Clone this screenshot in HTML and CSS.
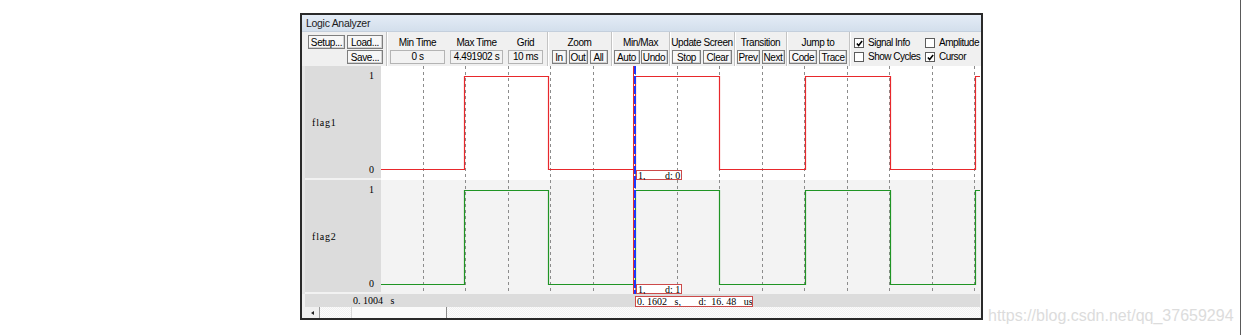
FILE: index.html
```html
<!DOCTYPE html>
<html lang="en">
<head>
    <meta charset="UTF-8">
    <title>Logic Analyzer</title>
    <link rel="stylesheet" href="styles.css">
</head>
<body>
<div class="page">
    <div class="screen">
        <div class="window">
            <div class="titlebar">Logic Analyzer</div>

            <div class="toolbar">
                <div class="group g-file">
                    <button class="btn b-setup">Setup...</button>
                    <button class="btn">Load...</button>
                    <button class="btn b-save">Save...</button>
                </div>

                <div class="group g-time">
                    <div class="field">
                        <span class="label">Min Time</span>
                        <span class="value v-min">0 s</span>
                    </div>
                    <div class="field">
                        <span class="label">Max Time</span>
                        <span class="value v-max">4.491902 s</span>
                    </div>
                    <div class="field">
                        <span class="label">Grid</span>
                        <span class="value v-grid">10 ms</span>
                    </div>
                </div>

                <div class="group g-zoom">
                    <span class="label">Zoom</span>
                    <div class="buttons">
                        <button class="btn b-in">In</button>
                        <button class="btn b-out">Out</button>
                        <button class="btn b-all">All</button>
                    </div>
                </div>

                <div class="group g-minmax">
                    <span class="label">Min/Max</span>
                    <div class="buttons tight">
                        <button class="btn b-auto">Auto</button>
                        <button class="btn b-undo">Undo</button>
                    </div>
                </div>

                <div class="group g-update">
                    <span class="label">Update Screen</span>
                    <div class="buttons">
                        <button class="btn b-stop">Stop</button>
                        <button class="btn b-stop">Clear</button>
                    </div>
                </div>

                <div class="group g-trans">
                    <span class="label">Transition</span>
                    <div class="buttons">
                        <button class="btn b-prev">Prev</button>
                        <button class="btn b-prev">Next</button>
                    </div>
                </div>

                <div class="group g-jump">
                    <span class="label">Jump to</span>
                    <div class="buttons">
                        <button class="btn b-code">Code</button>
                        <button class="btn b-code">Trace</button>
                    </div>
                </div>

                <div class="g-check">
                    <label class="check"><span class="box on"><svg viewBox="0 0 8 8"><path d="M1 4 L3 6.2 L7 1.2"/></svg></span>Signal Info</label>
                    <label class="check"><span class="box"></span>Amplitude</label>
                    <label class="check"><span class="box"></span>Show Cycles</label>
                    <label class="check"><span class="box on"><svg viewBox="0 0 8 8"><path d="M1 4 L3 6.2 L7 1.2"/></svg></span>Cursor</label>
                </div>
            </div>

            <div class="plot">
                <div class="row">
                    <div class="side"></div>
                    <div class="pane">
                        <span class="tick">1</span>
                        <span class="name">flag1</span>
                        <span class="tick">0</span>
                    </div>
                    <svg class="wave" width="599" height="114" viewBox="0 0 599 114">
                        <g class="grid">
                            <line x1="42.5" y1="0" x2="42.5" y2="114"/>
                            <line x1="84.5" y1="0" x2="84.5" y2="114"/>
                            <line x1="127.5" y1="0" x2="127.5" y2="114"/>
                            <line x1="169.5" y1="0" x2="169.5" y2="114"/>
                            <line x1="212.5" y1="0" x2="212.5" y2="114"/>
                            <line x1="254.5" y1="0" x2="254.5" y2="114"/>
                            <line x1="296.5" y1="0" x2="296.5" y2="114"/>
                            <line x1="338.5" y1="0" x2="338.5" y2="114"/>
                            <line x1="381.5" y1="0" x2="381.5" y2="114"/>
                            <line x1="423.5" y1="0" x2="423.5" y2="114"/>
                            <line x1="466.5" y1="0" x2="466.5" y2="114"/>
                            <line x1="508.5" y1="0" x2="508.5" y2="114"/>
                            <line x1="551.5" y1="0" x2="551.5" y2="114"/>
                            <line x1="593.5" y1="0" x2="593.5" y2="114"/>
                        </g>
                        <path class="trace red" d="M0 103.5 H83.5 V10.5 H167.5 V103.5 H254.5 V10.5 H338.5 V103.5 H424.5 V10.5 H509.5 V103.5 H594.5 V10.5 H599"/>
                        <line class="cursor-under" x1="252.5" y1="0" x2="252.5" y2="114"/>
                        <line class="cursor" x1="254" y1="0" x2="254" y2="114"/>
                        <rect class="tag-box" x="255.5" y="104.5" width="45" height="9"/>
                        <text class="tag" x="257" y="112.5">1,</text>
                        <text class="tag" x="284" y="112.5">d: 0</text>
                    </svg>
                </div>

                <div class="row alt">
                    <div class="side"></div>
                    <div class="pane">
                        <span class="tick">1</span>
                        <span class="name">flag2</span>
                        <span class="tick">0</span>
                    </div>
                    <svg class="wave" width="599" height="114" viewBox="0 0 599 114">
                        <g class="grid">
                            <line x1="42.5" y1="0" x2="42.5" y2="114"/>
                            <line x1="84.5" y1="0" x2="84.5" y2="114"/>
                            <line x1="127.5" y1="0" x2="127.5" y2="114"/>
                            <line x1="169.5" y1="0" x2="169.5" y2="114"/>
                            <line x1="212.5" y1="0" x2="212.5" y2="114"/>
                            <line x1="254.5" y1="0" x2="254.5" y2="114"/>
                            <line x1="296.5" y1="0" x2="296.5" y2="114"/>
                            <line x1="338.5" y1="0" x2="338.5" y2="114"/>
                            <line x1="381.5" y1="0" x2="381.5" y2="114"/>
                            <line x1="423.5" y1="0" x2="423.5" y2="114"/>
                            <line x1="466.5" y1="0" x2="466.5" y2="114"/>
                            <line x1="508.5" y1="0" x2="508.5" y2="114"/>
                            <line x1="551.5" y1="0" x2="551.5" y2="114"/>
                            <line x1="593.5" y1="0" x2="593.5" y2="114"/>
                        </g>
                        <path class="trace green" d="M0 104.5 H83.5 V10.5 H167.5 V104.5 H254.5 V10.5 H338.5 V104.5 H424.5 V10.5 H509.5 V104.5 H594.5 V10.5 H599"/>
                        <line class="cursor-under" x1="252.5" y1="0" x2="252.5" y2="114"/>
                        <line class="cursor" x1="254" y1="0" x2="254" y2="114"/>
                        <rect class="tag-box" x="255.5" y="104.5" width="45" height="9"/>
                        <text class="tag" x="257" y="112.5">1,</text>
                        <text class="tag" x="284" y="112.5">d: 1</text>
                    </svg>
                </div>

                <div class="timebar">
                    <span class="time-now">0. 1004   s</span>
                    <span class="time-cursor">0. 1602   s,       d:  16. 48   us</span>
                </div>

                <div class="scrollbar">
                    <span class="arrow"></span>
                    <div class="track"><span class="thumb"></span></div>
                </div>
            </div>
        </div>

        <div class="watermark">https://blog.csdn.net/qq_37659294</div>
    </div>
</div>
</body>
</html>
```

FILE: styles.css
```css
body{
    margin: 0;
    background: #fff;
    font-family: "Liberation Sans", Arial, sans-serif;
}

.page{
    width: 1241px;
    height: 335px;
    box-sizing: border-box;
    padding: 13px 0 0 300px;
    border-right: 1px solid #5a5a5a;
    overflow: hidden;
}

.screen{
    display: flex;
}

.window{
    width: 683px;
    height: 307px;
    box-sizing: border-box;
    border: 2px solid #2a2a2a;
    background: #f0f0f0;
    display: flex;
    flex-direction: column;
    flex: none;
}

.titlebar{
    height: 17px;
    box-sizing: border-box;
    padding-left: 4px;
    font-size: 10.5px;
    letter-spacing: -0.3px;
    line-height: 16px;
    color: #1c1c1c;
    background: linear-gradient(#e4ecf6, #d3dfec);
    border-bottom: 1px solid #c4cfdc;
}

/* toolbar */
.toolbar{
    display: flex;
    height: 34px;
    flex: none;
    font-size: 10px;
    letter-spacing: -0.4px;
    color: #000;
}

.group{
    box-sizing: border-box;
    height: 100%;
    padding-top: 3px;
    border-right: 1px solid #c4c4c4;
    box-shadow: 1px 0 0 #fff;
    display: flex;
    flex-direction: column;
    align-items: center;
}

.label{
    height: 15px;
    line-height: 15px;
    white-space: nowrap;
}

.buttons{
    display: flex;
    gap: 2px;
}

.buttons.tight{
    gap: 1px;
}

.btn{
    height: 14px;
    box-sizing: border-box;
    padding: 0;
    border: 1px solid #7e7e7e;
    background: #f7f7f7;
    box-shadow: inset -1px -1px #d2d2d2;
    font-family: inherit;
    font-size: inherit;
    letter-spacing: inherit;
    line-height: 11px;
    color: #000;
    text-align: center;
    white-space: nowrap;
}

.g-file{
    width: 85px;
    padding: 3px 0 0 6px;
    display: grid;
    grid-template-columns: 37px 36px;
    grid-template-rows: 14px 14px;
    gap: 1px 2px;
    align-content: start;
}

.g-file .b-save{
    grid-column: 2;
}

.g-time{
    width: 161px;
    padding-left: 3px;
    flex-direction: row;
    align-items: flex-start;
    gap: 5px;
}

.field{
    display: flex;
    flex-direction: column;
    align-items: center;
}

.value{
    height: 14px;
    box-sizing: border-box;
    border: 1px solid #b4b4b4;
    background: #f2f2f2;
    line-height: 12px;
    text-align: center;
    white-space: nowrap;
}

.v-min{ width: 55px; }
.v-max{ width: 53px; }
.v-grid{ width: 35px; }

.g-zoom{ width: 64px; }
.g-minmax{ width: 58px; }
.g-update{ width: 65px; }
.g-trans{ width: 52px; }
.g-jump{ width: 63px; }

.b-in{ width: 15px; }
.b-out{ width: 19px; }
.b-all{ width: 18px; }
.b-auto{ width: 26px; }
.b-undo{ width: 27px; }
.b-stop{ width: 29px; }
.b-prev{ width: 23px; }
.b-code{ width: 28px; }

.g-check{
    flex: 1;
    padding: 6px 0 0 4px;
    display: grid;
    grid-template-columns: 71px auto;
    grid-auto-rows: 10px;
    row-gap: 4px;
    white-space: nowrap;
    letter-spacing: -0.5px;
}

.check{
    display: flex;
    align-items: center;
    gap: 4px;
    line-height: 10px;
}

.box{
    width: 10px;
    height: 10px;
    box-sizing: border-box;
    border: 1px solid #5c5c5c;
    background: #fff;
    display: flex;
    align-items: center;
    justify-content: center;
}

.box svg{
    width: 7px;
    height: 7px;
}

.box path{
    fill: none;
    stroke: #000;
    stroke-width: 1.8;
}

/* plot */
.plot{
    display: flex;
    flex-direction: column;
}

.row{
    display: flex;
    height: 114px;
    background: #fff;
}

.row.alt{
    background: #f3f3f3;
}

.side{
    width: 3px;
    background: #e6e6e6;
}

.pane{
    width: 76px;
    box-sizing: border-box;
    padding: 5px 7px 3px 7px;
    background: #dcdcdc;
    border-bottom: 2px solid #f2f2f2;
    display: flex;
    flex-direction: column;
    justify-content: space-between;
    font-family: "Liberation Serif", "Times New Roman", serif;
    font-size: 10px;
    line-height: 10px;
    color: #000;
}

.tick{
    text-align: right;
}

.name{
    letter-spacing: 0.8px;
}

.wave{
    display: block;
    flex: none;
}

.grid line{
    stroke: #8c8c8c;
    stroke-width: 1;
    stroke-dasharray: 3 3;
}

.trace{
    fill: none;
    stroke-width: 1.2;
}

.trace.red{ stroke: #e8282c; }
.trace.green{ stroke: #1f9424; }

.cursor{
    stroke: #1b36ff;
    stroke-width: 2;
    stroke-dasharray: 8 2;
}

.cursor-under{
    stroke: #e03030;
    stroke-width: 1;
}

.tag-box{
    fill: #fff;
    stroke: #cc4a4a;
    stroke-width: 1;
}

.tag{
    font-family: "Liberation Serif", "Times New Roman", serif;
    font-size: 10px;
    fill: #000;
}

.timebar{
    height: 13px;
    margin-left: 3px;
    width: 675px;
    display: flex;
    align-items: center;
    background: #dcdcdc;
    font-family: "Liberation Serif", "Times New Roman", serif;
    font-size: 10px;
    line-height: 10px;
    white-space: pre;
}

.time-now{
    width: 330px;
    box-sizing: border-box;
    padding-left: 48px;
}

.time-cursor{
    width: 118px;
    height: 11px;
    margin-top: 2px;
    box-sizing: border-box;
    padding-left: 1px;
    border: 1px solid #cc4a4a;
    background: #fff;
    line-height: 9px;
    overflow: hidden;
}

.scrollbar{
    height: 11px;
    margin-left: 3px;
    width: 675px;
    display: flex;
}

.arrow{
    width: 15px;
    box-sizing: border-box;
    border-right: 1px solid #9a9a9a;
    background: #f0f0f0;
    display: flex;
    align-items: center;
    justify-content: center;
}

.arrow::before{
    content: "";
    border-top: 2px solid transparent;
    border-bottom: 2px solid transparent;
    border-right: 3px solid #222;
}

.track{
    flex: 1;
    background: repeating-conic-gradient(#f1f1f1 0 25%, #fcfcfc 0 50%) 0 0 / 2px 2px;
}

.thumb{
    display: block;
    width: 96px;
    height: 100%;
    margin-left: 31px;
    box-sizing: border-box;
    border-left: 1px solid #d8d8d8;
    border-right: 1px solid #8a8a8a;
    background: #fafafa;
}

.watermark{
    align-self: flex-end;
    margin: 0 0 -5px 5px;
    font-size: 16px;
    line-height: 18px;
    color: #dcdcdc;
    white-space: nowrap;
}
```
